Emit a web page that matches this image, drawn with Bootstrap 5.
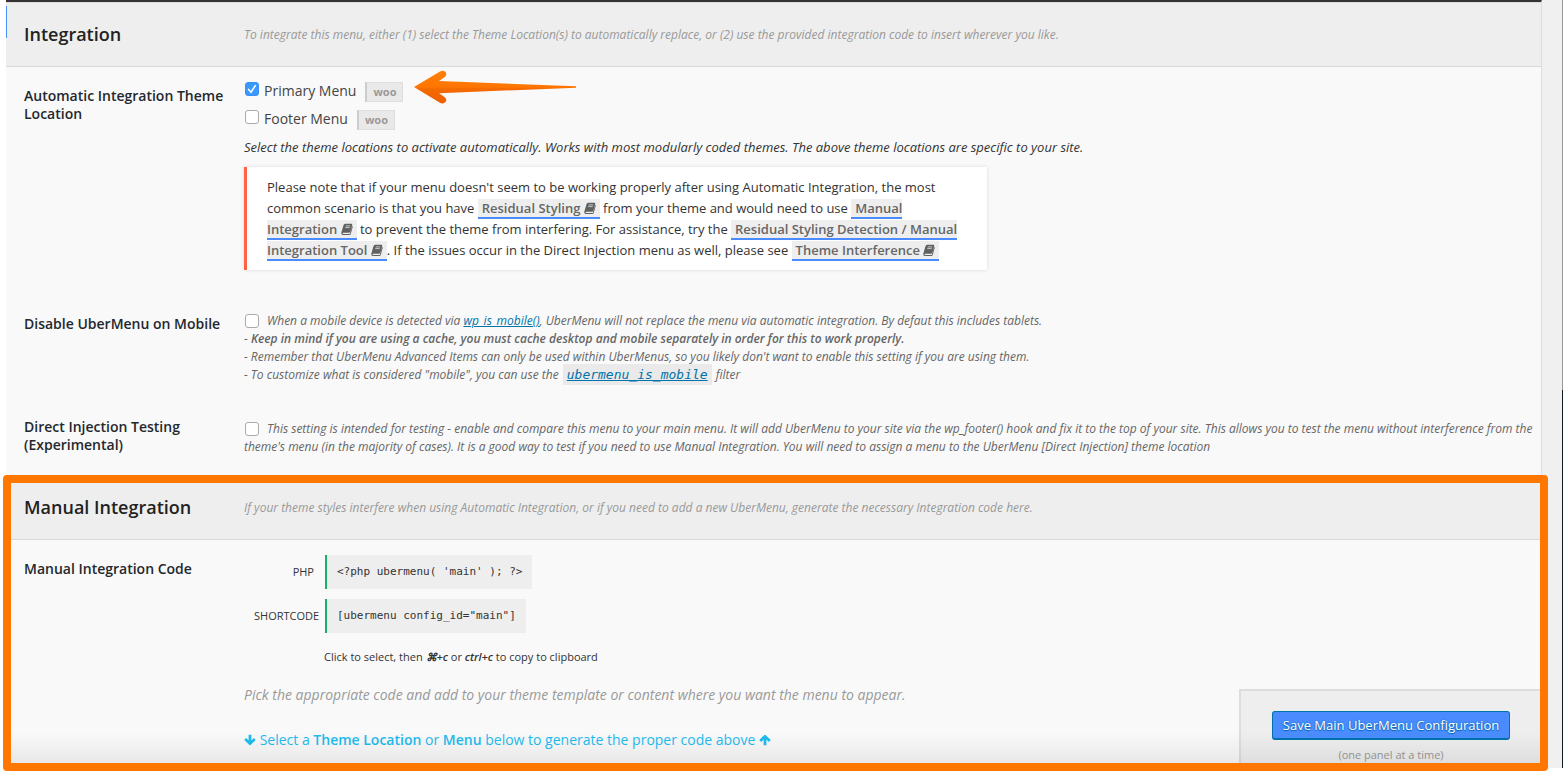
<!DOCTYPE html>
<html lang="en">
<head>
<meta charset="utf-8">
<meta name="viewport" content="width=device-width, initial-scale=1">
<title>UberMenu Control Panel - Integration</title>
<link href="https://cdn.jsdelivr.net/npm/bootstrap@5.3.0/dist/css/bootstrap.min.css" rel="stylesheet">
<style>
body { font-family: "Open Sans", sans-serif; font-size: 13px; line-height: 18px; color: #444; background: #fff; padding-bottom: 6px; }
.shell { padding-left: 6px; }
.panel { background: #f9f9f9; border-top: 2px solid #333; border-right: 1px solid #ddd; }
.gutter { width: 20px; background: #f0f0f0; }
.edge { width: 1px; background: linear-gradient(#999 0 390px, #0c1a26 390px); }
.tab-line { left: 0; top: 4px; width: 1px; height: 32px; background: #4a90f9; }
.opt-row { display: grid; grid-template-columns: 220px minmax(0, 1fr); padding-left: 18px; }
.opt-head { min-height: 65px; align-items: center; background: #eee; border-top: 1px solid #ddd; border-bottom: 1px solid #d9d9d9; }
.opt-head h2 { font-size: 18px; line-height: 24px; font-weight: 600; color: #222; padding-bottom: 2px; }
.opt-head p { font-size: 12px; font-style: italic; color: #999; }
.opt-label { font-size: 14px; line-height: 18px; font-weight: 600; color: #23282d; padding-top: 20px; padding-right: 12px; }
.row-auto { min-height: 228px; }
.row-mobile { min-height: 103px; }
.row-direct { min-height: 77px; }
.row-code { min-height: 228px; }
.field-auto { padding-top: 10px; }
.loc { height: 28px; font-size: 14px; }
.loc .box { margin: 0 5px 4px 1px; }
.box { appearance: none; width: 14px; height: 14px; margin: 0 8px 0 1px; border: 1px solid #aaa; border-radius: 3px; background: #fff; vertical-align: -3px; }
.box:checked { border-color: #3b8ff5; background: #3b99fc url("data:image/svg+xml,%3Csvg xmlns='http://www.w3.org/2000/svg' viewBox='0 0 12 12'%3E%3Cpath d='M2.6 6.4 5 9.2 9.3 2.6' fill='none' stroke='%23fff' stroke-width='1.6' stroke-linecap='round'/%3E%3C/svg%3E"); }
.tag { font-size: 11px; line-height: 17px; font-weight: 700; color: #999; background: #e9e9e9; border: 1px solid #ddd; border-left: 2px solid #ccc; padding: 0 6px 1px; margin: 2px 0 0 9px; }
.desc { font-style: italic; color: #333; margin: 5px 0 11px; }
.note { max-width: 743px; background: #fff; border-left: 3px solid #ff6347; box-shadow: 0 0 4px rgba(0,0,0,.12); padding: 10px 20px 9px; line-height: 21px; color: #333; }
.kb { font-weight: 600; color: #666; background: #eee; border-bottom: 2px solid #4a8cff; padding: 0 4px; text-decoration: none; }
.kb svg { width: 12px; height: 12px; vertical-align: -1px; }
.help { font-size: 12px; font-style: italic; color: #666; }
.help strong { font-weight: 600; }
.help a { color: #0073aa; }
.row-mobile .help { padding-top: 17px; }
.row-direct .help { padding-top: 22px; }
.help code { font: italic 13px/18px "DejaVu Sans Mono", monospace; color: inherit; background: #eaeaea; padding: 3px 4px; margin: 0 1px; }
.field-code { padding-top: 15px; }
.snip { height: 34px; margin-bottom: 10px; font-size: 11px; }
.snip-name { width: 60px; margin: 0 11px 0 10px; text-align: right; color: #333; }
.snip code { font: 11px/34px "DejaVu Sans Mono", monospace; color: #333; background: #eee; border-left: 2px solid #1bb06a; padding: 0 10px; }
.hint { font-size: 11px; color: #333; padding-left: 80px; margin: 15px 0 20px; }
.hint strong { font-weight: 600; }
.pick { font-size: 14px; font-style: italic; color: #999; margin-bottom: 27px; }
.gen { font-size: 14px; color: #1ebcf0; }
.gen b { font-weight: 600; }
.gen svg { width: 12px; height: 12px; vertical-align: -1px; }
.shade { height: 36px; background: linear-gradient(rgba(0,0,0,0), rgba(0,0,0,.08)); pointer-events: none; }
.savebox { width: 302px; height: 79px; background: #eee; border: 2px solid #ddd; border-right: 0; border-bottom: 0; padding-top: 20px; }
.save { font-size: 13px; line-height: 16px; padding: 5px 10px; color: #fff; background: #4a8cff; border: 1px solid #0073aa; border-bottom-width: 2px; border-radius: 3px; text-shadow: 0 0 2px #0067b0, 0 1px 1px #0067b0; }
.savebox small { font-size: 11px; color: #999; margin-top: 6px; }
.frame { inset: 0 -7px -3px -3px; border: 8px solid #ff7600; border-radius: 4px; pointer-events: none; }
.arrow { left: 407px; top: 66px; width: 166px; height: 38px; }
</style>
</head>
<body>
<div class="shell d-flex">
  <main class="panel flex-grow-1 position-relative">
    <span class="tab-line position-absolute"></span>
    <section>
      <header class="opt-row opt-head">
        <h2 class="m-0">Integration</h2>
        <p class="m-0">To integrate this menu, either (1) select the Theme Location(s) to automatically replace, or (2) use the provided integration code to insert wherever you like.</p>
      </header>
      <div class="opt-row row-auto">
        <div class="opt-label">Automatic Integration Theme Location</div>
        <div class="field-auto">
          <div class="loc d-flex align-items-center"><input class="box" type="checkbox" id="primary" checked><label for="primary">Primary Menu</label><span class="tag">woo</span></div>
          <div class="loc d-flex align-items-center"><input class="box" type="checkbox" id="footer"><label for="footer">Footer Menu</label><span class="tag">woo</span></div>
          <p class="desc">Select the theme locations to activate automatically. Works with most modularly coded themes. The above theme locations are specific to your site.</p>
          <div class="note">Please note that if your menu doesn't seem to be working properly after using Automatic Integration, the most common scenario is that you have <a class="kb" href="#">Residual Styling <svg viewBox="0 0 12 12"><use href="#book"/></svg></a> from your theme and would need to use <a class="kb" href="#">Manual Integration <svg viewBox="0 0 12 12"><use href="#book"/></svg></a> to prevent the theme from interfering. For assistance, try the <a class="kb" href="#">Residual Styling Detection / Manual Integration Tool <svg viewBox="0 0 12 12"><use href="#book"/></svg></a>. If the issues occur in the Direct Injection menu as well, please see <a class="kb" href="#">Theme Interference <svg viewBox="0 0 12 12"><use href="#book"/></svg></a></div>
        </div>
      </div>
      <div class="opt-row row-mobile">
        <label class="opt-label" for="mobile">Disable UberMenu on Mobile</label>
        <div class="help"><input class="box" type="checkbox" id="mobile">When a mobile device is detected via <a href="#">wp_is_mobile()</a>, UberMenu will not replace the menu via automatic integration. By defaut this includes tablets.<br>
        - <strong>Keep in mind if you are using a cache, you must cache desktop and mobile separately in order for this to work properly.</strong><br>
        - Remember that UberMenu Advanced Items can only be used within UberMenus, so you likely don't want to enable this setting if you are using them.<br>
        - To customize what is considered "mobile", you can use the <code><a href="#">ubermenu_is_mobile</a></code> filter</div>
      </div>
      <div class="opt-row row-direct">
        <label class="opt-label" for="direct">Direct Injection Testing (Experimental)</label>
        <div class="help"><input class="box" type="checkbox" id="direct">This setting is intended for testing - enable and compare this menu to your main menu. It will add UberMenu to your site via the wp_footer() hook and fix it to the top of your site. This allows you to test the menu without interference from the theme's menu (in the majority of cases). It is a good way to test if you need to use Manual Integration. You will need to assign a menu to the UberMenu [Direct Injection] theme location</div>
      </div>
    </section>
    <section class="position-relative">
      <header class="opt-row opt-head">
        <h2 class="m-0">Manual Integration</h2>
        <p class="m-0">If your theme styles interfere when using Automatic Integration, or if you need to add a new UberMenu, generate the necessary Integration code here.</p>
      </header>
      <div class="opt-row row-code">
        <div class="opt-label">Manual Integration Code</div>
        <div class="field-code">
          <div class="snip d-flex align-items-center"><span class="snip-name">PHP</span><code>&lt;?php ubermenu( 'main' ); ?&gt;</code></div>
          <div class="snip d-flex align-items-center"><span class="snip-name">SHORTCODE</span><code>[ubermenu config_id="main"]</code></div>
          <p class="hint">Click to select, then <strong><em>⌘+c</em></strong> or <strong><em>ctrl+c</em></strong> to copy to clipboard</p>
          <p class="pick">Pick the appropriate code and add to your theme template or content where you want the menu to appear.</p>
          <p class="gen mb-0"><svg viewBox="0 0 13 12"><use href="#down"/></svg> Select a <b>Theme Location</b> or <b>Menu</b> below to generate the proper code above <svg viewBox="0 0 13 12"><use href="#up"/></svg></p>
        </div>
      </div>
      <div class="savebox position-absolute end-0 bottom-0 text-center">
        <button class="save" type="button">Save Main UberMenu Configuration</button>
        <small class="d-block">(one panel at a time)</small>
      </div>
      <div class="shade position-absolute start-0 end-0 bottom-0"></div>
      <div class="frame position-absolute"></div>
    </section>
    <svg class="arrow position-absolute" viewBox="0 0 166 38">
      <defs><linearGradient id="fire" x1="0" y1="0" x2="0" y2="1"><stop offset="0" stop-color="#ff7f0a"/><stop offset=".5" stop-color="#ff7600"/><stop offset=".55" stop-color="#f56a00"/><stop offset="1" stop-color="#ec5f00"/></linearGradient></defs>
      <path fill="url(#fire)" d="M1 19 27 3.500Q31 1.500 33 4.500 34 7.500 31.500 9.300L26 13 163 18.300V19.700L26 25.200 31.500 29Q34.500 31.500 32.500 34 30 36.500 26.500 34.500Z"/>
    </svg>
  </main>
  <div class="gutter flex-shrink-0"></div>
  <div class="edge flex-shrink-0"></div>
</div>
<svg width="0" height="0" class="position-absolute">
  <symbol id="book" viewBox="0 0 12 12"><path fill="#606060" d="M4.200.8h6.300q1 .1.7 1.100L9.300 8.800q-.3.9-1.300.9H2.200q-.9.1-.6.9.2.4.8.4h6.400L11.200 3l.6.500-2 7.200Q9.500 12 8.300 12H2Q.2 11.900.2 10.100L2.400 2.500Q2.800.9 4.200.8Z"/><path stroke="#ddd" stroke-width=".8" d="M4.700 2.900h4.500M4.200 4.600h4.500"/></symbol>
  <symbol id="down" viewBox="0 0 13 12"><path fill="none" stroke="#1ebcf0" stroke-width="3" d="M6.500 0v10M1.300 5l5.200 5 5.200-5"/></symbol>
  <symbol id="up" viewBox="0 0 13 12"><path fill="none" stroke="#1ebcf0" stroke-width="3" d="M6.500 12V2M1.300 7l5.200-5 5.200 5"/></symbol>
</svg>
<script src="https://cdn.jsdelivr.net/npm/bootstrap@5.3.0/dist/js/bootstrap.bundle.min.js"></script>
</body>
</html>
